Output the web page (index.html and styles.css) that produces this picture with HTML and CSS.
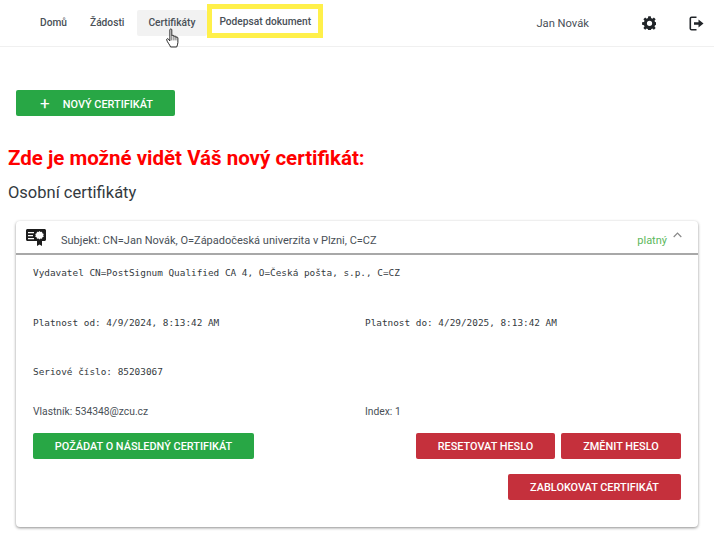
FILE: index.html
```html
<!DOCTYPE html>
<html lang="cs">
<head>
  <meta charset="UTF-8">
  <title>Certifikáty</title>
  <meta name="viewport" content="width=device-width, initial-scale=1">
  <link rel="stylesheet" href="styles.css">
</head>
<body>
  <nav class="topbar">
    <a class="nav-item nav-home">Domů</a>
    <a class="nav-item nav-req">Žádosti</a>
    <a class="nav-item nav-cert">Certifikáty
      <svg class="hand" width="14" height="20" viewBox="0 0 14.500 20">
        <path d="M4 1.500c0-1.200 2-1.200 2 0v6.300c.3-1 2.200-.9 2.200.3v.5c.3-1 2.100-.9 2.100.4v.5c.4-.9 2-.7 2 .5v4.700c0 1.900-.8 3-1.200 4.600H4.700C4 17 .9 13.800.7 11.800c-.1-1.200 1-1.500 1.700-.8L4 13z" fill="#fff" stroke="#222" stroke-width="1"/>
        <path d="M6 8v4.500M8.200 8.500v4M10.300 9v3.500" stroke="#222" stroke-width=".7" fill="none"/>
      </svg>
    </a>
    <a class="nav-item nav-sign">Podepsat dokument</a>
    <span class="nav-user">Jan Novák</span>
    <svg class="nav-icon nav-gear" width="14" height="14" viewBox="0 0 16 16">
      <path fill-rule="evenodd" fill="#212529" d="M6.600.2h2.800l.4 2.200 1.400.6 1.800-1.300 2 2-1.300 1.800.6 1.400 2.200.4v2.800l-2.200.4-.6 1.400 1.300 1.800-2 2-1.800-1.300-1.400.6-.4 2.200H6.600l-.4-2.200-1.400-.6L3 15.700l-2-2 1.300-1.800-.6-1.400L-.5 10V7.200l2.200-.4.6-1.400L1 3.700l2-2 1.800 1.300 1.400-.6zM8 5.400a3 3 0 1 0 0 6 3 3 0 0 0 0-6z" transform="translate(.6 0)"/>
    </svg>
    <svg class="nav-icon nav-exit" width="15" height="15" viewBox="0 0 15 15">
      <path d="M7.500 1.200H2.600c-.8 0-1.300.5-1.300 1.300v10c0 .8.500 1.300 1.300 1.300h4.900" fill="none" stroke="#212529" stroke-width="1.600"/>
      <path d="M5 6.200h4.500V3.400l5 4.100-5 4.100V8.800H5z" fill="#212529"/>
    </svg>
  </nav>

  <main class="content">
    <button class="btn btn-green btn-new"><span class="plus">+</span>Nový certifikát</button>

    <h1 class="notice">Zde je možné vidět Váš nový certifikát:</h1>
    <h2 class="section-title">Osobní certifikáty</h2>

    <div class="card">
      <div class="card-head">
        <svg class="cert-icon" width="20" height="18" viewBox="0 0 20 18">
          <path fill="#1d1d1d" d="M1.500 0h17c.8 0 1.500.7 1.500 1.500v9c0 .8-.7 1.500-1.500 1.500H16v5l-2.500-1.600L11 17v-5H1.500C.7 12 0 11.300 0 10.500v-9C0 .7.700 0 1.500 0z"/>
          <path fill="#fff" d="M2 3h6v1.300H2zM2 6h5v1.300H2zM2 9h6v1.300H2z"/>
          <path fill="#fff" d="M13.500 2l1 1.100 1.500-.3.400 1.500 1.400.6-.6 1.400.6 1.400-1.400.6-.4 1.500-1.500-.3-1 1.100-1-1.100-1.500.3-.4-1.500-1.400-.6.6-1.400-.6-1.400 1.400-.6.4-1.500 1.500.3z"/>
        </svg>
        <span class="subject">Subjekt: CN=Jan Novák, O=Západočeská univerzita v Plzni, C=CZ</span>
        <span class="status">platný</span>
        <svg class="chevron" width="9" height="6" viewBox="0 0 9 6"><path d="M.7 5L4.500 1.200 8.300 5" fill="none" stroke="#888" stroke-width="1.200"/></svg>
      </div>
      <div class="card-body">
        <p class="mono row-issuer">Vydavatel CN=PostSignum Qualified CA 4, O=Česká pošta, s.p., C=CZ</p>
        <div class="cols row-valid">
          <span class="mono">Platnost od: 4/9/2024, 8:13:42 AM</span>
          <span class="mono">Platnost do: 4/29/2025, 8:13:42 AM</span>
        </div>
        <p class="mono row-serial">Seriové číslo: 85203067</p>
        <div class="cols row-owner">
          <span>Vlastník: 534348@zcu.cz</span>
          <span>Index: 1</span>
        </div>
        <div class="actions">
          <button class="btn btn-green btn-renew">Požádat o následný certifikát</button>
          <div class="actions-right">
            <button class="btn btn-red btn-reset">Resetovat heslo</button>
            <button class="btn btn-red btn-change">Změnit heslo</button>
            <button class="btn btn-red btn-block">Zablokovat certifikát</button>
          </div>
        </div>
      </div>
    </div>
  </main>
</body>
</html>
```

FILE: styles.css
```css
* { box-sizing: border-box; }
html, body { height: 100%; }
body { margin: 0; background: #fff; color: #343a40; font-family: Roboto, sans-serif; font-size: 11px; overflow: hidden; }

.topbar { display: flex; align-items: center; height: 47px; border-bottom: 1px solid #f0f0f0; padding-left: 28px; }
.nav-item { display: block; color: #495057; font-weight: 500; font-size: 10.200px; padding: 0 12px; line-height: 26px; height: 26px; white-space: nowrap; }
.nav-req { margin-left: -1px; }
.nav-cert { position: relative; background: #f2f2f2; border-radius: 2px; width: 70px; padding: 0 11px; margin-left: 1px; }
.hand { position: absolute; left: 29px; top: 18px; }
.nav-sign { border: 5px solid #fff04a; height: 34px; line-height: 26px; padding: 0 7px; width: 116px; margin-top: -4px; }
.nav-user { color: #495057; font-size: 11.200px; margin-left: 213px; }
.nav-icon { flex: none; }
.nav-gear { margin-left: 53px; }
.nav-exit { margin-left: 33px; }

.content { padding: 43px 8px 0; }
.btn { display: block; border: 0; border-radius: 2px; height: 26px; color: #fff; font-family: Roboto, sans-serif; font-size: 10.900px; font-weight: 500; text-transform: uppercase; padding: 0; }
.btn-green { background: #28a745; }
.btn-red { background: #c5303c; }
.btn-new { margin-left: 8px; width: 159px; padding-left: 2px; }
.plus { font-size: 17px; font-weight: 400; margin-right: 13px; vertical-align: -1px; }

.notice { margin: 30px 0 0; color: #f00; font-size: 20.500px; line-height: 24px; font-weight: 700; }
.section-title { margin: 12px 0 0; color: #343a40; font-size: 16.500px; line-height: 22px; font-weight: 400; }

.card { margin: 17px 8px 0; width: 682px; height: 306px; border-radius: 4px; background: #fff; box-shadow: 0 1px 3px rgba(0, 0, 0, .45); }
.card-head { display: flex; height: 34px; border-bottom: 2px solid #a8a8a8; padding-left: 10px; position: relative; }
.cert-icon { margin-top: 8px; }
.subject { margin-left: 15px; margin-top: 13px; font-size: 11px; line-height: 14px; color: #495057; }
.status { margin-left: auto; margin-top: 13px; line-height: 14px; font-size: 11px; color: #5cb85c; margin-right: 6px; }
.chevron { margin-top: 11px; margin-right: 16px; }

.card-body { padding: 0 17px; }
.mono { font-family: "DejaVu Sans Mono", monospace; font-size: 9.400px; color: #343a40; margin: 0; }
.row-issuer { margin-top: 11px; line-height: 13px; }
.cols { display: grid; grid-template-columns: 332px 1fr; }
.row-valid { margin-top: 37px; line-height: 13px; }
.row-serial { margin-top: 36px; line-height: 13px; }
.row-owner { margin-top: 27px; line-height: 13px; font-size: 10.300px; color: #495057; }

.actions { display: flex; justify-content: space-between; margin-top: 15px; }
.btn-renew { width: 221px; }
.actions-right { display: flex; flex-wrap: wrap; justify-content: flex-end; width: 265px; gap: 15px 6px; }
.btn-reset { width: 139px; }
.btn-change { width: 120px; }
.btn-block { width: 173px; }
```
